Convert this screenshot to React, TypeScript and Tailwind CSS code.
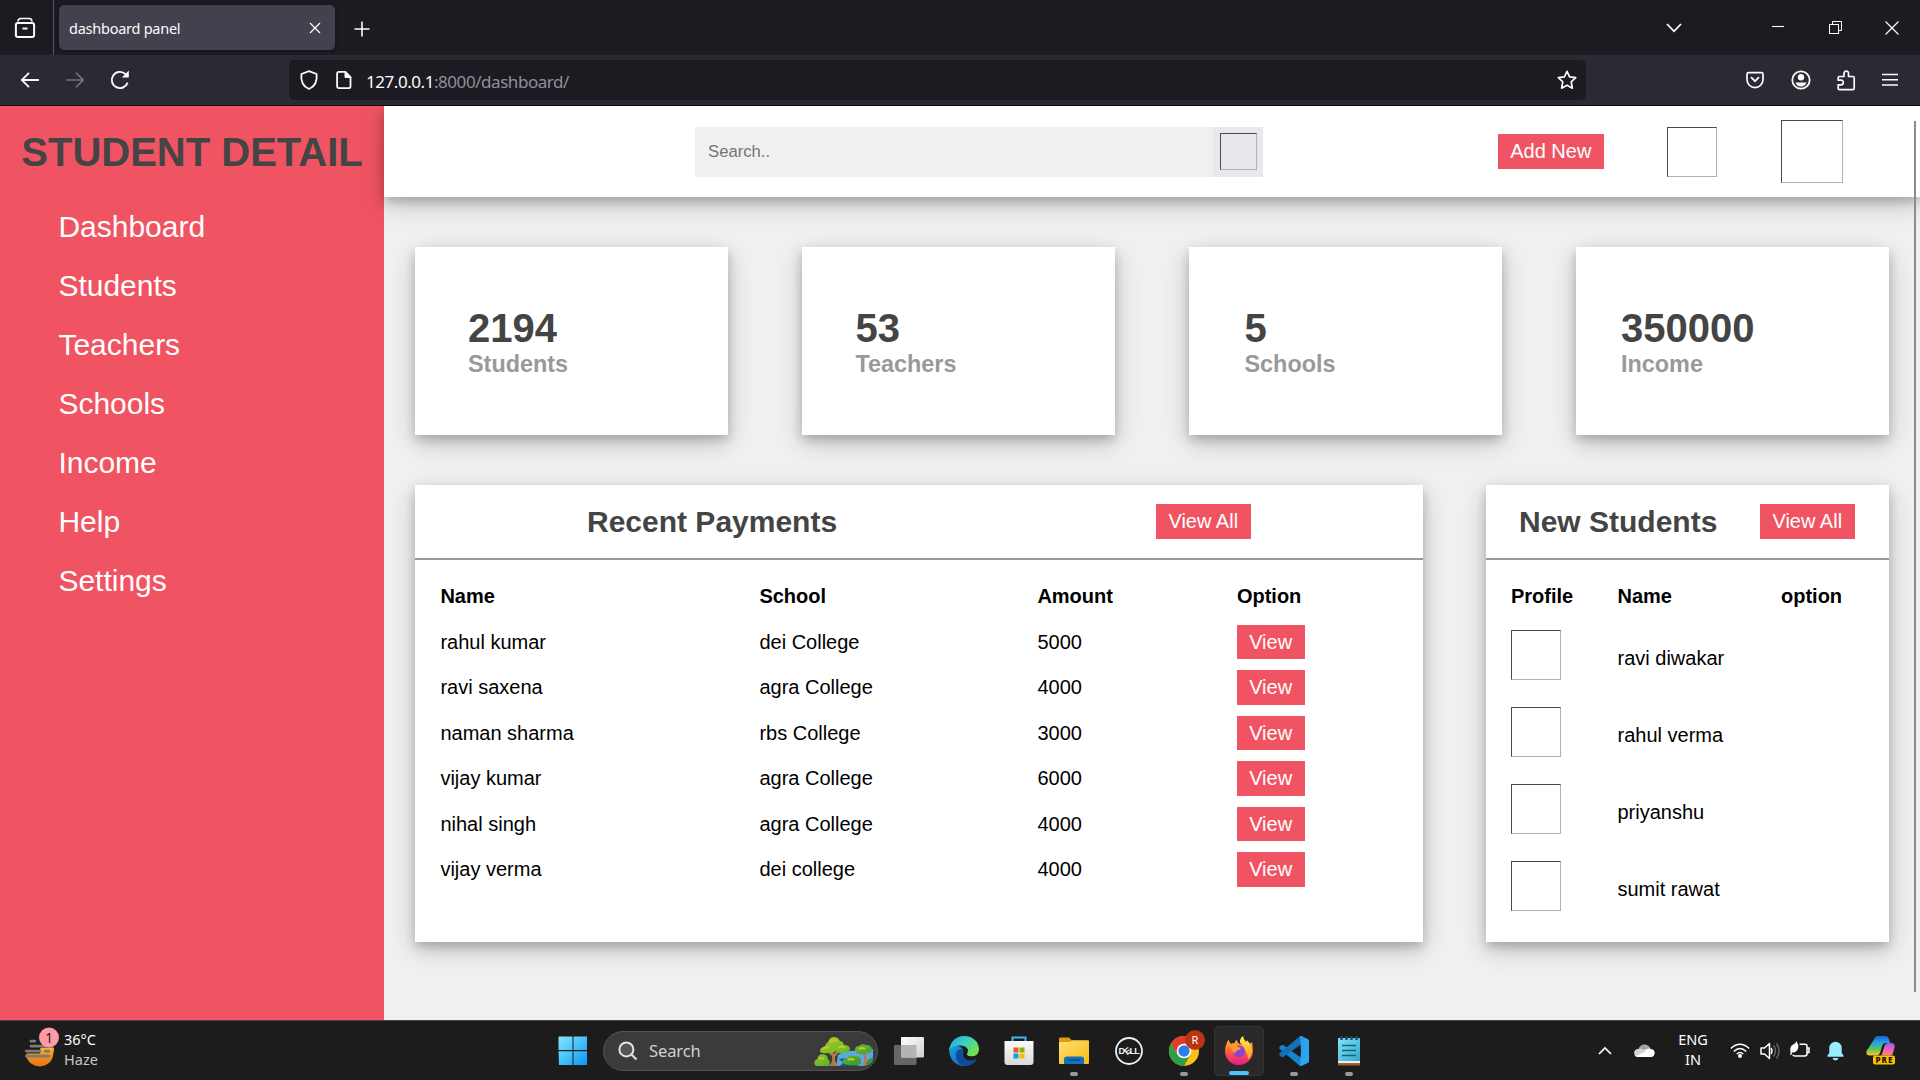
import React from "react";

const shadow = "shadow-[0_5px_10px_0_rgba(0,0,0,0.2),0_7.5px_25px_0_rgba(0,0,0,0.19)]";

const S = ({ w = 20, h, vb, className = "", children }: { w?: number; h?: number; vb: string; className?: string; children: React.ReactNode }) => (
  <svg width={w} height={h ?? w} viewBox={vb} fill="none" stroke="currentColor" className={`shrink-0 ${className}`}>{children}</svg>
);

function TabStrip() {
  return (
    <div className="flex h-[55px] items-center bg-[#1c1b22] text-[#fbfbfe]">
      <div className="flex h-full w-[54px] items-center justify-center border-r border-[#56555c] pr-1">
        <S w={22} h={22} vb="0 0 22 22" className="mt-px">
          <path d="M4 4.5Q4 1.5 7 1.5H15Q18 1.5 18 4.5" strokeWidth="1.6" />
          <rect x="1.9" y="6" width="18.2" height="14" rx="2" strokeWidth="2" />
          <path d="M8.5 11.5h5" strokeWidth="2" />
        </S>
      </div>
      <div className="ml-[5px] flex h-[45px] w-[276px] items-center justify-between rounded-[5px] bg-[#42414d] pl-[10px] pr-[14px] shadow-[0_0_4px_rgba(0,0,0,0.4)]">
        <span className="mt-[2px] text-[14.5px] tracking-[-0.25px]">dashboard panel</span>
        <S w={12} vb="0 0 12 12"><path d="M1 1l10 10M11 1L1 11" strokeWidth="1.3" /></S>
      </div>
      <S w={16} vb="0 0 16 16" className="ml-[19px] mt-[3px]"><path d="M8 0.5v15M0.5 8h15" strokeWidth="1.6" /></S>
      <div className="ml-auto flex items-center">
        <S w={16} h={10} vb="0 0 16 10" className="mr-[90px]"><path d="M1 1l7 7.3L15 1" strokeWidth="1.8" /></S>
        <S w={12} h={12} vb="0 0 12 12" className="mr-[45px]"><path d="M0 4.5h12" strokeWidth="1.1" /></S>
        <S w={13} h={13} vb="0 0 13 13" className="mr-[43px]">
          <rect x="0.5" y="3.5" width="9" height="9" />
          <path d="M3.5 3.5v-3h9v9h-3" />
        </S>
        <S w={14} vb="0 0 14 14" className="mr-[21px]"><path d="M.5 .5l13 13M13.5 .5l-13 13" strokeWidth="1.2" /></S>
      </div>
    </div>
  );
}

function Toolbar() {
  return (
    <div className="relative z-10 flex h-[51px] items-center border-b border-[#0c0c0d] bg-[#2b2a33] text-[#fbfbfe]">
      <S w={20} vb="0 0 20 20" className="ml-5"><path d="M19 10H2M9 2.8L1.8 10L9 17.2" strokeWidth="1.8" /></S>
      <S w={20} vb="0 0 20 20" className="ml-[25px] text-[#77767c]"><path d="M1 10H18M11 2.8L18.2 10L11 17.2" strokeWidth="1.6" /></S>
      <S w={20} vb="0 0 20 20" className="ml-[25px]">
        <path d="M17.6 12.6A8.1 8.1 0 1 1 15.6 4.2" strokeWidth="1.9" />
        <path d="M18.8 .6V7.5H11.9Z" fill="currentColor" stroke="none" />
      </S>
      <div className="ml-[159px] flex h-10 w-[1297px] items-center rounded-[5px] bg-[#1c1b22] pl-[10px] pr-[9px]">
        <S w={20} h={20} vb="0 0 20 20"><path d="M10 1.1L17.6 4C18.3 10.5 16.5 16.3 10 19C3.5 16.3 1.7 10.5 2.4 4Z" strokeWidth="1.8" strokeLinejoin="round" /></S>
        <S w={18} h={20} vb="0 0 18 20" className="ml-4">
          <path d="M4 1.9H10.5L15.5 7V16.3Q15.5 18.2 13.6 18.2H4Q2.1 18.2 2.1 16.3V3.8Q2.1 1.9 4 1.9Z" strokeWidth="1.8" />
          <path d="M10 1.5V7.5H16Z" fill="currentColor" />
        </S>
        <span className="ml-[13px] mt-[3px] text-[17px] tracking-[-0.45px] text-[#fbfbfe]">127.0.0.1<span className="text-[#8f8f9d]">:8000/dashboard/</span></span>
        <S w={20} vb="0 0 20 20" className="ml-auto"><path d="M10 1.3l2.6 5.5 6.1.8-4.5 4.2 1.2 6.4L10 15.2l-5.4 3 1.2-6.4L1.3 7.6l6.1-.8z" strokeWidth="1.7" strokeLinejoin="round" /></S>
      </div>
      <div className="ml-auto flex items-center">
        <S w={18} h={18} vb="0 0 18 18" className="mr-[27px]">
          <path d="M2.6 1.6H15.4Q17 1.6 17 3.2V8.6A8 8 0 0 1 1 8.6V3.2Q1 1.6 2.6 1.6Z" strokeWidth="1.7" />
          <path d="M5 6.2l4 4 4-4" strokeWidth="1.8" />
        </S>
        <S w={20} vb="0 0 20 20" className="mr-[26px]">
          <circle cx="10" cy="10" r="8.7" strokeWidth="1.8" />
          <circle cx="10" cy="7.3" r="3.2" fill="currentColor" stroke="none" />
          <path d="M4.5 12.5h11A5.8 5.8 0 0 1 4.5 12.5Z" fill="currentColor" stroke="none" />
        </S>
        <S w={19} h={21} vb="0 0 19 21" className="mr-[26px]">
          <path d="M2.5 6.5H7V3.5Q7 1.2 9.3 1.2T11.5 3.5V6.5H15.8Q17.2 6.5 17.2 8V18.2Q17.2 19.6 15.8 19.6H2.6Q1.2 19.6 1.2 18.2V14.8H4Q6.3 14.6 6.3 12.4T4 10.2H1.2V8Q1.2 6.5 2.5 6.5Z" strokeWidth="1.7" strokeLinejoin="round" />
        </S>
        <S w={16} h={14} vb="0 0 16 14" className="mr-[22px]"><path d="M0 1.5h16M0 6.8h16M0 12.1h16" strokeWidth="1.5" /></S>
      </div>
    </div>
  );
}

const nav = ["Dashboard", "Students", "Teachers", "Schools", "Income", "Help", "Settings"];
const cards = [
  ["2194", "Students", "pl-[53px]"],
  ["53", "Teachers", "pl-[53.5px]"],
  ["5", "Schools", "pl-[55.5px]"],
  ["350000", "Income", "pl-[45px]"],
];
const payments = [
  ["rahul kumar", "dei College", "5000"],
  ["ravi saxena", "agra College", "4000"],
  ["naman sharma", "rbs College", "3000"],
  ["vijay kumar", "agra College", "6000"],
  ["nihal singh", "agra College", "4000"],
  ["vijay verma", "dei college", "4000"],
];
const students = ["ravi diwakar", "rahul verma", "priyanshu", "sumit rawat"];

const Broken = ({ className }: { className: string }) => (
  <div className={`shrink-0 border border-t-[#4a4a4a] border-l-[#4a4a4a] border-r-[#b0b0b0] border-b-[#b0b0b0] ${className}`} />
);

const Btn = ({ children, className = "" }: { children: string; className?: string }) => (
  <span className={`flex shrink-0 items-center justify-center whitespace-nowrap bg-[#f05462] pr-[0.5px] text-[20px] leading-[23px] text-white ${className}`}>{children}</span>
);

function Page() {
  return (
    <div className="flex h-[914px] overflow-hidden bg-[#f0f0f0] font-['Liberation_Sans',Arial,sans-serif]">
      <aside className="w-96 shrink-0 bg-[#f05462]">
        <h1 className="pt-[23px] text-center text-[40px] font-bold leading-[46px] text-[#444]">STUDENT DETAIL</h1>
        <ul className="mt-[22px] pl-[58.4px] text-[30px] leading-[59px] text-white">
          {nav.map((n) => <li key={n}>{n}</li>)}
        </ul>
      </aside>
      <main className="relative min-w-0 flex-1">
        <header className={`flex h-[91px] items-center bg-white ${shadow}`}>
          <div className="ml-[311px] flex h-[50px] w-[568px] items-center bg-[#f0f0f0]">
            <span className="flex-1 pl-[13px] text-[16.7px] text-[#757575]">Search..</span>
            <div className="flex h-[50px] w-[50px] items-center justify-center bg-[#e9e9ed]">
              <Broken className="h-[37px] w-[37px]" />
            </div>
          </div>
          <Btn className="ml-[235px] h-[35px] w-[106px]">Add New</Btn>
          <Broken className="ml-[63px] h-[50px] w-[50px]" />
          <Broken className="ml-[64px] h-[63px] w-[62px]" />
        </header>
        <section className="mt-[50px] flex justify-between px-[31px]">
          {cards.map(([n, l, p]) => (
            <div key={l} className={`h-[188px] w-[313px] bg-white pt-[58px] font-bold ${p} ${shadow}`}>
              <div className="text-[40px] leading-[46px] text-[#444]">{n}</div>
              <div className="text-[23.4px] leading-[27px] text-[#999]">{l}</div>
            </div>
          ))}
        </section>
        <section className="mt-[50px] flex justify-between px-[31px]">
          <div className={`h-[457px] w-[1008px] bg-white ${shadow}`}>
            <div className="flex h-[75px] items-center border-b-2 border-[#999]">
              <h2 className="w-[741px] pl-[172px] text-[30px] font-bold text-[#444]">Recent Payments</h2>
              <Btn className="h-[35px] w-[95px]">View All</Btn>
            </div>
            <div className="pl-[25.4px] pt-[13.85px] text-[20px] text-black">
              <div className="grid h-[45.5px] grid-cols-[319px_278px_199.5px_1fr] items-center pb-[1.5px] font-bold">
                <span>Name</span><span>School</span><span>Amount</span><span>Option</span>
              </div>
              {payments.map(([a, b, c]) => (
                <div key={a} className="grid h-[45.5px] grid-cols-[319px_278px_199.5px_1fr] items-center">
                  <span className="mb-[0.6px]">{a}</span>
                  <span className="mb-[0.6px]">{b}</span>
                  <span className="mb-[0.6px]">{c}</span>
                  <Btn className="h-[34.4px] w-[68px]">View</Btn>
                </div>
              ))}
            </div>
          </div>
          <div className={`h-[457px] w-[403px] bg-white ${shadow}`}>
            <div className="flex h-[75px] items-center border-b-2 border-[#999]">
              <h2 className="w-[274px] pl-[33px] text-[30px] font-bold text-[#444]">New Students</h2>
              <Btn className="h-[35px] w-[95px]">View All</Btn>
            </div>
            <div className="pl-[25px] pt-[14px] text-[20px] text-black">
              <div className="grid h-[45px] grid-cols-[106.5px_163.5px_1fr] items-center pb-[2px] font-bold">
                <span>Profile</span><span>Name</span><span>option</span>
              </div>
              {students.map((s) => (
                <div key={s} className="grid h-[77px] grid-cols-[106.5px_1fr] pt-[11px]">
                  <Broken className="h-[50px] w-[50px]" /><span className="pt-[17px] leading-[23px]">{s}</span>
                </div>
              ))}
            </div>
          </div>
        </section>
        <div className="absolute right-[4px] top-[15px] h-[871px] w-[2px] bg-[#8c8c8c]" />
      </main>
    </div>
  );
}

const Slot = ({ children, dot = "", box = "" }: { children: React.ReactNode; dot?: string; box?: string }) => (
  <div className={`relative flex h-[50px] w-[50px] shrink-0 items-center justify-center rounded-[5px] ${box}`}>
    {children}
    {dot && <span className={`absolute bottom-0 h-1 rounded-full ${dot}`} />}
  </div>
);
const grey = "w-2 bg-[#9a9a9a]";

const Svg = ({ children, w = 30, h = 30, vb = "0 0 30 30", className = "" }: { children: React.ReactNode; w?: number; h?: number; vb?: string; className?: string }) => (
  <svg width={w} height={h} viewBox={vb} fill="none" className={`shrink-0 overflow-visible ${className}`}>{children}</svg>
);

function Gradients() {
  const g = (id: string, stops: string[], x2 = 1, y2 = 1) => (
    <linearGradient id={id} x1="0" y1="0" x2={x2} y2={y2}>
      {stops.map((c, i) => <stop key={i} offset={i / (stops.length - 1)} stopColor={c} />)}
    </linearGradient>
  );
  return (
    <svg width="0" height="0" className="absolute">
      <defs>
        {g("win", ["#8be3ff", "#45c3fb", "#0b93f5"])}
        {g("edgeTop", ["#1fa5e4", "#38cfc5", "#72e24b"], 1, 0.6)}
        {g("edgeBlue", ["#1b9de2", "#0f5db4"])}
        {g("folder", ["#ffe06b", "#f8b91b"])}
        {g("fox", ["#ffb52e", "#ff5a3c", "#e8178a"], 0, 1)}
        {g("foxTop", ["#fff04a", "#ff9a2e"], 0, 1)}
        {g("vs", ["#2d9de8", "#2baaf7"])}
        {g("note", ["#84e2f5", "#31a3c9"])}
        {g("copA", ["#1f62d8", "#1fa3e0", "#62c35a", "#f0c931"], 0, 1)}
        {g("copB", ["#9a5cf0", "#e85fbd", "#ff8b63"], 0, 1)}
        {g("leaf", ["#b9c927", "#6fb92b", "#258b31"])}
        {g("sun", ["#f7bb2e", "#f08a1c", "#ee7414"], 0, 1)}
        {g("task", ["#ffffff", "#cfcfcf"])}
        {g("bag", ["#fafafa", "#d9d9d9"], 0, 1)}
      </defs>
    </svg>
  );
}

function Taskbar() {
  return (
    <div className="relative z-10 flex h-[60px] items-center border-t border-[#454545] bg-[#1c1c1c] text-white">
      <Gradients />
      <div className="flex w-[547px] items-center pl-[24px]">
        <Svg w={36} h={38} vb="0 0 36 38">
          <path d="M2.5 21.5H16v-4q0-2 2-2h12q0 4-.8 6.5A13.5 12.5 0 0 1 2.5 24.5Z" fill="url(#sun)" />
          <path d="M7 9.2h3.8M7 14.2h13M2.3 19.2h14M21.3 19.2h3.5M2.3 24.2h22.5" stroke="#7b7b7b" strokeWidth="2.8" strokeLinecap="round" />
          <circle cx="25" cy="5.5" r="10" fill="#ff99a4" />
          <text x="25" y="10.5" textAnchor="middle" fontSize="13.5" fill="#1c1c1c">1</text>
        </Svg>
        <div className="-mt-1 ml-[4px] text-[14.5px] leading-5"><div>36°C</div><div className="text-[#c8c8c8]">Haze</div></div>
      </div>
      <Slot>
        <Svg className="ml-px"><path d="M1 .5h13.5V14H.5V1zM15.5 .5H29V14H15.5zM.5 15.2h14V29H1zM15.5 15.2H29V29H15.5z" fill="url(#win)" /></Svg>
      </Slot>
      <div className="relative ml-[6px] flex h-10 w-[275px] items-center rounded-full border border-[#535353] bg-[#3b3b3b] pl-[14px]">
        <Svg w={20} h={20} vb="0 0 20 20"><circle cx="8.4" cy="8.4" r="7" stroke="#e4e4e4" strokeWidth="2" fill="#555" /><path d="M13.5 13.5l5 5" stroke="#d5d5d5" strokeWidth="2.4" /></Svg>
        <span className="ml-[11px] mt-px text-[16.5px] tracking-[-0.1px] text-[#d0d0d0]">Search</span>
        <Svg w={60} h={30} vb="0 0 60 30" className="ml-auto mr-[3px] mt-[3px]">
          <path d="M24 18Q32 13 44 14L59 12V22Q58 28 49 29H22Z" fill="#5aa9e6" />
          <path d="M24 29Q32 27 25 22L33 21Q29 25 46 29Z" fill="#0c5a9b" />
          <path d="M15 29q4-4 3-10l-6-6 2-1 6 5 5-6 2 1-6 8q-1 4 3 9z" fill="#b9774a" />
          <path d="M49 28q2-6 0-11l3-1q0 6 2 12z" fill="#b9774a" />
          <path d="M.5 27q-1-4 3-5 0-4 4.5-5 5 0 6 5 3 3 1 7H3Q1 29 .5 27ZM6 15q-1-4 5-6 1-3 3-4 2-5 6-5 4 0 6 4 3 0 4 4 6 0 6 4-1 5-8 4-4 1-6-2-5 4-8 2-4 1-8-1ZM28 26q0-4 5-5 2-4 8-2 6 0 6 5 1 4-4 4-9 1-15-2ZM41 13q0-4 4-4 3-3 7-1 6 0 6 5-1 4-5 3-3 3-6 1-6 0-6-4ZM52 27q1-5 7-7 0 6-5 8z" fill="url(#leaf)" />
          <path d="M16 5q4-4 7 0M9 12q3-3 6-1M24 11q4-3 7 0M34 23q3-2 6 0M45 12q3-2 6 0M5 22q2-2 5 0" stroke="#c5cb2a" strokeWidth="2" />
        </Svg>
      </div>
      <div className="ml-[6px] flex gap-[5px]">
        <Slot>
          <Svg w={30} h={28} vb="0 0 30 28"><rect y="8" width="22.5" height="20" rx="1" fill="#666" /><rect x="7" y="0" width="23" height="20.5" rx="1" fill="url(#task)" /><rect x="7" y="8" width="15.5" height="12.5" fill="#b4b4b4" /></Svg>
        </Slot>
        <Slot>
          <Svg>
            <path d="M.3 13C-.5 22 6 30 15 30c5.5 0 10-2.5 13-7-3 2-7 2.5-10 1-4.5-2-5-6-3.5-9.5C13 10 3 6 .3 13Z" fill="url(#edgeBlue)" />
            <path d="M7 17c-1 7 3 12.5 9 13 5-.3 9.3-2.8 12-7-4 2.5-9 2.2-12-.3-3.2-2.7-3.3-6-1.5-9.2-3-1-7 .5-7.5 3.5Z" fill="#0d4c9c" />
            <path d="M0 14.5C.8 6 7 0 15 0c9 0 15 6 15 13 0 5-3.5 7.5-7.5 7.5-3 0-5.3-1-4.7-2.5C21 13.5 17 9.5 11.5 9.5 6 9.5 2 11.5 0 14.5Z" fill="url(#edgeTop)" />
            <path d="M14.5 14.5q2-3.5 4-.7.3 2.2-.7 4.2.5 2.5 4.7 2.5 2.5 0 5-1-3 4-8 3-6-1.500-5-8Z" fill="#1c1c1c" />
          </Svg>
        </Slot>
        <Slot>
          <Svg className="mt-px">
            <path d="M8.5 6V1.5h13V6" stroke="#35b9f1" strokeWidth="2" />
            <path d="M.5 5h29v21q0 3-3 3h-23q-3 0-3-3z" fill="url(#bag)" />
            <path d="M9.5 11.5h5v5h-5z" fill="#f25022" /><path d="M15.5 11.5h5v5h-5z" fill="#7fba00" /><path d="M9.5 17.5h5v5h-5z" fill="#00a4ef" /><path d="M15.5 17.5h5v5h-5z" fill="#ffb900" />
          </Svg>
        </Slot>
        <Slot dot={grey}>
          <Svg w={30} h={28} vb="0 0 30 28" className="mt-px">
            <path d="M0 1.5Q0 .5 1 .5h9l3 3v4H0z" fill="#dc9c0b" />
            <path d="M0 5h11l2-1.8h16q1 0 1 1V26q0 1-1 1H1q-1 0-1-1z" fill="url(#folder)" />
            <path d="M5 27v-5q0-2.5 2.5-2.5h15Q25 19.5 25 22v5z" fill="#1371bd" /><path d="M8.5 23h13" stroke="#0a4a86" strokeWidth="1.5" />
          </Svg>
        </Slot>
        <Slot>
          <Svg w={28} h={28} vb="0 0 28 28" className="font-['Liberation_Sans']">
            <circle cx="14" cy="14" r="13" stroke="#f0f0f0" strokeWidth="1.8" />
            <g fontSize="9" fontWeight="700" fill="#f0f0f0">
              <text x="3.6" y="17.2">D</text>
              <text x="9.7" y="17.2" transform="rotate(-36 12.6 14)">E</text>
              <text x="14.6" y="17.2">L</text>
              <text x="19.2" y="17.2">L</text>
            </g>
          </Svg>
        </Slot>
        <Slot dot={grey}>
          <Svg>
            <circle cx="15" cy="15" r="15" fill="#fbc116" />
            <path d="M2 7.5A15 15 0 0 1 28 7.5H15L8.5 18.7Z" fill="#e33b2e" />
            <path d="M2 7.5A15 15 0 0 0 15 30L21.5 18.7H8.5Z" fill="#2c9f47" />
            <circle cx="15" cy="15" r="7.3" fill="#fff" /><circle cx="15" cy="15" r="5.7" fill="#2f7de9" />
            <circle cx="26" cy="4" r="10" fill="#ba3510" /><text x="26" y="8" textAnchor="middle" fontSize="11" fill="#fff">R</text>
          </Svg>
        </Slot>
        <Slot dot="w-5 bg-[#4cc2ff]" box="border border-[#353535] bg-[#292929]">
          <Svg w={28} h={29} vb="0 0 28 29">
            <path d="M0 15.5Q0 10 3.5 3.5 4.5 7 6 8q2-1 3.5-1 .5-2 2.5-3.2-.3 2.7 2.5 4.2L22 9q4-2 5-3 1 4 1 9A14 13.8 0 0 1 0 15.5Z" fill="url(#fox)" />
            <path d="M15 6.5Q14.5 2.5 18 0q.5 3.5 3 6 .8-.8.7-2Q26.500 8 27 15q0 5-4 8.5 0-5-2.5-8.5Q19 10 15 6.5Z" fill="url(#foxTop)" />
            <circle cx="14" cy="15.5" r="6" fill="#8d43d6" />
            <path d="M6 8q3.5-1.5 7 3 2.5 0 3 1-.8 2-3.5 2.2-3 .5-2 4Q6 15 6 8Z" fill="#ff9c2b" />
          </Svg>
        </Slot>
        <Slot dot={grey}>
          <Svg>
            <path d="M2.2 9.3L.3 11v1.6L21 30l1.5-8L4.6 9.3Q3.4 8.5 2.2 9.3Z" fill="#1684cf" />
            <path d="M2.2 20.7L.3 19v-1.6L21 0l1.5 8L4.6 20.7q-1.2.8-2.4 0Z" fill="#1172b9" />
            <path d="M21 0Q21.8-.2 22.5.1L29 3.2q1 .5 1 1.5v20.6q0 1-1 1.5l-6.5 3.1q-.7.3-1.5.1L22 15Z" fill="url(#vs)" />
          </Svg>
        </Slot>
        <Slot dot={grey}>
          <Svg w={22} h={30} vb="0 0 22 30">
            <rect y="2" width="22" height="26" rx="1" fill="url(#note)" />
            <path d="M0 25h22v2H0z" fill="#eee" /><path d="M0 27.2h22v2.3H0z" fill="#a65a20" />
            <path d="M3.5 0v4M8.5 0v4M13.5 0v4M18.5 0v4" stroke="#174d63" strokeWidth="2.4" />
            <path d="M4 9.5h14M4 14.5h14M4 19.5h14" stroke="#0b6785" strokeWidth="1.7" />
          </Svg>
        </Slot>
      </div>
      <div className="ml-auto flex items-center">
        <Svg w={14} h={8} vb="0 0 14 8" className="mr-[22px]"><path d="M1 7l6-6 6 6" stroke="#fff" strokeWidth="1.7" /></Svg>
        <Svg w={21} h={14} vb="0 0 21 14" className="mr-[23px]">
          <path d="M4 13Q0 12 .3 8.5 1 5 4.5 5 6 .5 10.5.5T16.5 5Q20.5 5.5 20.5 9T17 13Z" fill="#a6a6a6" />
          <path d="M3.5 13q-2 0-3-2L12 5.5q3-1.5 5-.5 4 .5 3.5 4.5-.5 3.5-4 3.5Z" fill="#fff" />
          <path d="M4.5 5Q9 4 12 7.5L2 12Q0 10.500.3 8.300 1 5 4.500 5" fill="#d5d5d5" />
        </Svg>
        <div className="-mt-[3px] mr-[22px] w-[30px] text-center text-[14.5px] leading-5"><div>ENG</div><div>IN</div></div>
        <Svg w={20} h={15} vb="0 0 20 15" className="mr-[10px]">
          <path d="M.8 5.5Q10-3 19.2 5.5M3.8 8.5Q10 2.5 16.2 8.5M6.8 11Q10 8 13.2 11" stroke="#fff" strokeWidth="1.5" /><circle cx="10" cy="13" r="2" fill="#fff" />
        </Svg>
        <Svg w={20} h={18} vb="0 0 20 18" className="mr-[10px]">
          <path d="M1 6h3.5l5-4.5v15L4.5 12H1Z" stroke="#fff" strokeWidth="1.5" strokeLinejoin="round" /><path d="M11 6q2 3 0 6" stroke="#fff" strokeWidth="1.4" /><path d="M13.5 3.5q4 5.5 0 11M16.5 1.5q5 7.5 0 15" stroke="#666" strokeWidth="1.4" />
        </Svg>
        <Svg w={20} h={17} vb="0 0 20 17" className="mb-[3px] mr-[17px]">
          <path d="M9.5 3.2h5.3q2.2 0 2.2 2.2v7.4q0 2.2-2.2 2.2H5q-1.7 0-2.3-1.3M17.5 7h1.5v4.5h-1.5" stroke="#fff" strokeWidth="1.5" />
          <path d="M.6 11.5Q-.8 5 3.5 3.3 6 2.3 6.3 0 9.8 5 7.3 9.3 5.5 12 2.3 11.3L1.2 14H0Z" fill="#fff" />
        </Svg>
        <Svg w={17} h={20} vb="0 0 17 20" className="mr-[22px]">
          <path d="M2.3 7A6.2 6.2 0 0 1 14.7 7v5l1.8 2.5v1.3H.5v-1.3L2.3 12ZM5.5 17h6q-1 2.5-3 2.5t-3-2.5Z" fill="#99ebff" />
        </Svg>
        <Svg className="mr-[24px]">
          <path d="M8 3.5Q9 0 12.5 0H19q3 0 4 3l1 4h-4q-3 0-4 3.5L14 17q-1 2.5-4 2.5H4q-4.5 0-3.5-4.5Z" fill="url(#copA)" />
          <path d="M15.5 19.5l2.8-9Q19.3 7 22.5 7H25q4.5 0 3.5 4.5l-1.3 5q-.8 3-3.2 3Z" fill="url(#copB)" />
          <rect x="7" y="19.5" width="22" height="9" rx="2" fill="#ffbf00" />
          <text x="9.5" y="27" fontSize="8" fontWeight="800" textLength="17" fill="#111">PRE</text>
        </Svg>
      </div>
    </div>
  );
}

export default function App() {
  return (
    <div className="h-[1080px] w-[1920px] overflow-hidden font-['Noto_Sans','Open_Sans',sans-serif]">
      <TabStrip />
      <Toolbar />
      <Page />
      <Taskbar />
    </div>
  );
}
